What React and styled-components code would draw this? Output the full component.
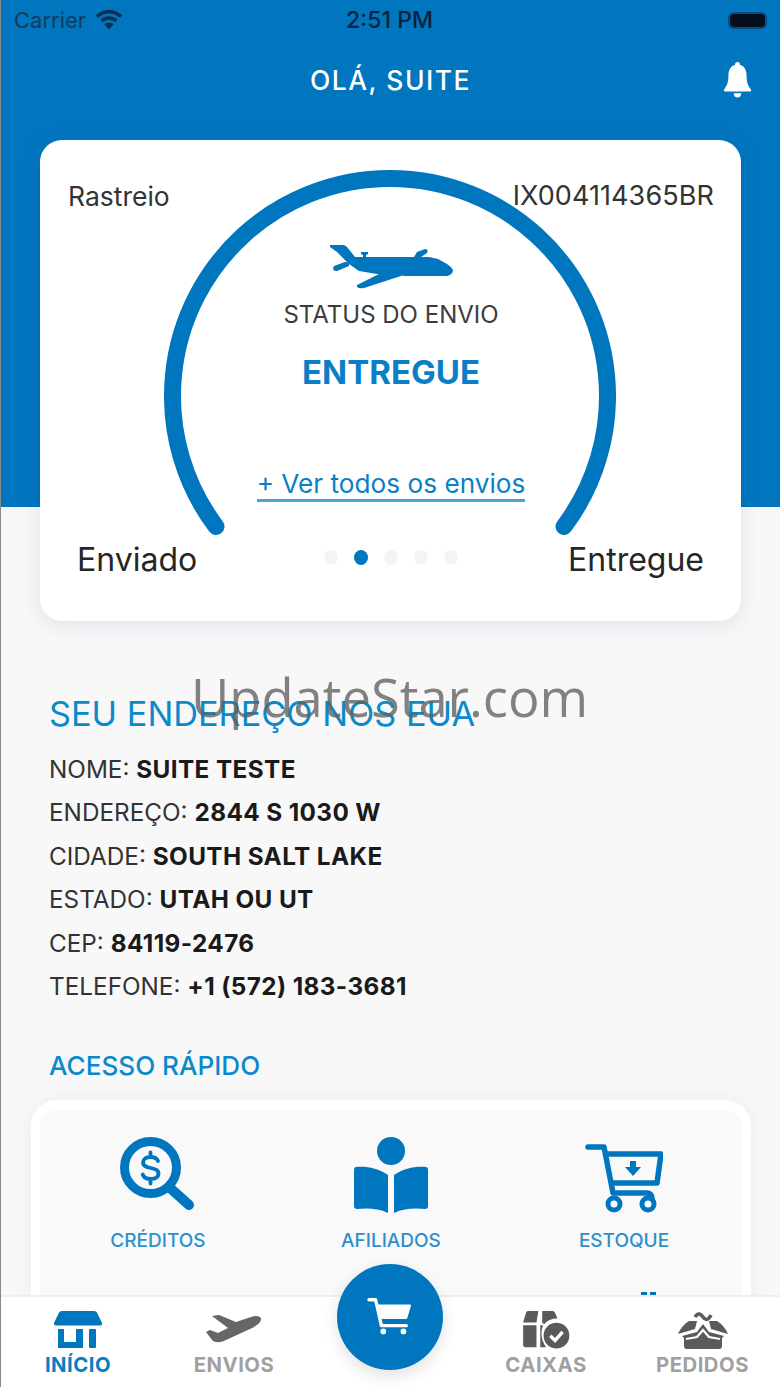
import React from 'react'
import styled, { createGlobalStyle } from 'styled-components'

const BLUE = '#0076bf'

const GlobalStyle = createGlobalStyle`
  html, body { margin: 0; padding: 0; background: #f8f8f9; }
  * { box-sizing: border-box; }
  body { font-family: Inter, "Liberation Sans", sans-serif; }
`

const Screen = styled.div`
  position: relative;
  width: 780px;
  height: 1387px;
  overflow: hidden;
  background: #f8f8f9;
  border-left: 1px solid #8a8a8a;
`

const Hero = styled.header`
  height: 507px;
  background: ${BLUE};
  padding: 0 39px;
`

const StatusBar = styled.div`
  display: grid;
  grid-template-columns: 1fr auto 1fr;
  align-items: center;
  height: 40px;
  margin: 0 -39px;
  padding: 0 15px 0 13px;
  font-size: 22px;
`

const Carrier = styled.div`
  display: flex;
  align-items: center;
  gap: 9px;
  color: #123c5f;
`

const Clock = styled.div`
  color: #08233b;
  font-weight: 500;
  font-size: 23px;
`

const Battery = styled.div`
  justify-self: end;
  width: 35px;
  height: 13px;
  border-radius: 4px;
  background: #05101c;
  box-shadow: 0 0 0 2px rgba(8, 50, 90, 0.6);
`

const Title = styled.div`
  display: flex;
  align-items: center;
  justify-content: center;
  position: relative;
  height: 80px;
  margin-bottom: 20px;
  color: #fff;
  font-size: 26.5px;
  font-weight: 500;
  letter-spacing: 1.5px;
`

const BellSpot = styled.span`
  position: absolute;
  right: -11px;
  top: 22px;
  line-height: 0;
`

const Card = styled.section`
  position: relative;
  height: 481px;
  padding: 41px 27px 0 28px;
  background: #fff;
  border-radius: 22px;
  box-shadow: 0 4px 22px rgba(0, 40, 80, 0.1);
`

const Gauge = styled.svg`
  position: absolute;
  left: 124px;
  top: 30px;
`

const CardTop = styled.div`
  position: relative;
  display: flex;
  justify-content: space-between;
  color: #333;
  font-size: 26.5px;
  line-height: 30px;
`

const TrackCode = styled.span`
  font-size: 27px;
  letter-spacing: 0.1px;
`

const Center = styled.div`
  position: relative;
  display: flex;
  flex-direction: column;
  align-items: center;
  margin-top: 33px;
`

const StatusLabel = styled.div`
  margin-top: 10px;
  color: #3c3c3c;
  font-size: 24px;
  line-height: 30px;
`

const StatusValue = styled.div`
  margin-top: 23px;
  color: #0a7fc6;
  font-size: 33px;
  font-weight: 700;
  line-height: 38px;
`

const SeeAll = styled.a`
  margin-top: 78px;
  color: #0a7fc6;
  font-size: 26.2px;
  line-height: 30px;
  border-bottom: 3px solid #4aa3d8;
`

const CardBottom = styled.div`
  position: relative;
  display: grid;
  grid-template-columns: 1fr auto 1fr;
  align-items: center;
  margin: 38px 10px 0 9px;
  color: #262626;
  font-size: 32px;
  line-height: 40px;
`

const RightText = styled.span`
  justify-self: end;
`

const Dots = styled.div`
  display: flex;
  gap: 16px;
  margin-top: -6px;
`

const Dot = styled.span`
  width: 14px;
  height: 15px;
  border-radius: 50%;
  background: ${p => (p.$active ? BLUE : '#f4f4f4')};
`

const Address = styled.section`
  margin-top: 187px;
  padding: 0 48px;
`

const SectionTitle = styled.h2`
  margin: 0;
  color: #0a8aca;
  font-size: 34.3px;
  font-weight: 400;
  line-height: 40px;
  white-space: nowrap;
`

const AddressList = styled.div`
  display: flex;
  flex-direction: column;
  margin-top: 14px;
`

const AddressLine = styled.div`
  color: #333;
  font-size: 24.3px;
  line-height: 43.4px;
  white-space: nowrap;
`

const Strong = styled.b`
  color: #1a1a1a;
  font-weight: 700;
  letter-spacing: 0.4px;
`

const QuickTitle = styled.h3`
  margin: 42px 0 0;
  color: #0a8aca;
  font-size: 26.1px;
  font-weight: 500;
  line-height: 32px;
`

const QuickPanel = styled.div`
  display: grid;
  grid-template-columns: repeat(3, 233px);
  justify-content: center;
  align-items: start;
  margin: 18px 29px 0 30px;
  height: 320px;
  padding-top: 36px;
  background: #f9f9fa;
  border: solid #fff;
  border-width: 10px 9px 0 9px;
  border-radius: 26px 26px 0 0;
  box-shadow: 0 0 22px rgba(0, 0, 0, 0.05);
`

const QuickItem = styled.div`
  display: flex;
  flex-direction: column;
  align-items: center;
`

const IconSlot = styled.div`
  display: flex;
  justify-content: center;
  height: 78px;
  margin-top: -9px;
  line-height: 0;
`

const QuickLabel = styled.span`
  margin-top: 14px;
  color: #2d90cc;
  font-size: 19px;
  font-weight: 500;
  line-height: 24px;
`

const TabBar = styled.nav`
  position: absolute;
  left: 0;
  right: 0;
  bottom: 0;
  display: grid;
  grid-template-columns: 154px 158px 1fr 158px 155px;
  height: 92px;
  background: #fff;
  border-top: 2px solid #eeeeee;
`

const Tab = styled.div`
  display: flex;
  flex-direction: column;
  align-items: center;
  padding-top: 12px;
`

const TabIcon = styled.div`
  display: flex;
  align-items: center;
  height: 42px;
  line-height: 0;
`

const TabLabel = styled.span`
  margin-top: 2px;
  color: ${p => (p.$active ? '#0a7ec2' : '#a0a0a0')};
  font-size: 20.3px;
  font-weight: 700;
  letter-spacing: 0.5px;
  line-height: 24px;
`

const Fab = styled.div`
  position: absolute;
  left: 336px;
  bottom: 17px;
  display: flex;
  align-items: center;
  justify-content: center;
  width: 106px;
  height: 106px;
  border-radius: 50%;
  background: ${BLUE};
  box-shadow: 0 6px 16px rgba(0, 0, 0, 0.12);
`

const PeekDots = styled.div`
  position: absolute;
  left: 640px;
  top: 1292px;
  width: 15px;
  height: 3px;
  background: linear-gradient(90deg, ${BLUE} 0 40%, transparent 40% 60%, ${BLUE} 60%);
`

const Watermark = styled.div`
  position: absolute;
  left: 190px;
  top: 665px;
  color: rgba(95, 95, 95, 0.78);
  font-family: "Open Sans", sans-serif;
  font-size: 52.5px;
  line-height: 64px;
  white-space: nowrap;
`

const WifiIcon = () => (
  <svg width="28" height="22" viewBox="0 0 28 22" fill="none" stroke="#0b2f4f" strokeWidth="3.4">
    <path d="M2 7.5C9 1.2 19 1.2 26 7.5" />
    <path d="M6.5 12C11 8 17 8 21.5 12" />
    <path d="M14 20.5l-4.6-5.2c2.600-2 6.600-2 9.200 0z" fill="#0b2f4f" stroke="none" />
  </svg>
)

const BellIcon = () => (
  <svg width="29" height="36" viewBox="0 0 30 38" fill="#fff">
    <path d="M15 0c1.600 0 2.600 1.200 2.600 2.800C22.600 4.200 24.600 9 24.600 14.500c0 6 .8 9.600 4.600 14.600.6 1 .2 2-1 2H1.800c-1.200 0-1.600-1-1-2C4.600 24.100 5.400 20.500 5.400 14.500 5.400 9 7.400 4.200 12.400 2.800 12.400 1.200 13.400 0 15 0z" />
    <path d="M11 33h8c0 2.800-1.800 4.500-4 4.500s-4-1.700-4-4.500z" />
  </svg>
)

const PlaneStatus = () => (
  <svg width="124" height="46" viewBox="0 0 124 46" fill={BLUE}>
    <path d="M1 1H14Q16 1 18 3L26 13H100L109 15L118 20Q124 24 124 27Q123 31 118 32H75L66 30H48L30 27L20 20L8 8L1 3Z" />
    <path d="M60 29L73 28Q75 30 72 32L35 44Q27 45 28 41L50 30Z" />
    <path d="M5 22L16 18Q21 18 20 22L8 27Q2 27 5 22Z" />
    <path d="M88 8L96 5Q100 5 98 9L92 13H85Z" />
    <path d="M32 8h7v2l-2 1v3h-3v-3l-2-1z" />
  </svg>
)

const CreditsIcon = () => (
  <svg width="78" height="78" viewBox="0 0 78 78" fill="none">
    <circle cx="31.500" cy="30.500" r="26" stroke={BLUE} strokeWidth="9" />
    <path d="M50 50 70 68" stroke={BLUE} strokeWidth="10" strokeLinecap="round" />
    <path d="M39 24c-1-2.500-4-4-7.500-4-4.500 0-7.500 2.200-7.500 5.500 0 7.500 15.500 3.500 15.500 11 0 3.500-3.200 5.500-7.800 5.500-4 0-7-1.700-8-4.500M31.500 15.500V20M31.500 42v4.500" stroke={BLUE} strokeWidth="3.800" strokeLinecap="round" />
  </svg>
)

const AffiliatesIcon = () => (
  <svg width="78" height="78" viewBox="0 0 78 78" fill={BLUE}>
    <circle cx="39" cy="14" r="14" />
    <path d="M4 30c10-1 22 1 32 8v38C26 71 14 71 5 72c-2 0-3-1-3-3V33c0-2 1-3 2-3z" />
    <path d="M74 30c-10-1-22 1-32 8v38c10-5 22-5 31-4 2 0 3-1 3-3V33c0-2-1-3-2-3z" />
  </svg>
)

const StockIcon = () => (
  <svg width="78" height="78" viewBox="0 0 78 78" fill="none" stroke={BLUE}>
    <path d="M3 10H19L28 56H62C65 56 67 58 67 61" strokeWidth="5.500" strokeLinecap="round" strokeLinejoin="round" />
    <path d="M21 17H76L72 46H27" strokeWidth="5.500" strokeLinejoin="round" />
    <circle cx="29" cy="67" r="6" strokeWidth="5" />
    <circle cx="63" cy="67" r="6" strokeWidth="5" />
    <path d="M45 24h6v6h5L48 39 40 30h5z" fill={BLUE} stroke="none" />
  </svg>
)

const StoreIcon = () => (
  <svg width="50" height="40" viewBox="0 0 50 40" fill={BLUE}>
    <path d="M9 1h32c1.500 0 2.500.8 3.200 2L49 13c.5 1.500-.2 2.500-2 2.500H3C1.200 15.500.5 14.500 1 13L5.800 3C6.500 1.800 7.500 1 9 1z" />
    <path d="M5 19h6v13h12V19h7v19H5z" />
    <rect x="36" y="19" width="7" height="19" rx="1" />
  </svg>
)

const PlaneTab = () => (
  <svg width="56" height="30" viewBox="0 0 56 30" fill="#666">
    <path d="M6 1L13 0L30 7L45 2C50 0 55 1 55 4C55 8 50 11 44 14L20 25C14 28 9 28 6 25L0 17L4 15L12 18L22 13Z" />
  </svg>
)

const BoxesTab = () => (
  <svg width="48" height="40" viewBox="0 0 50 42" fill="#5a5a5a">
    <path d="M6 1h11L15 13H1L4 3C4.500 2 5 1 6 1z" />
    <path d="M21 1h11c1 0 2 1 2.500 2L37 9c-6 0-11 2-14 6l-2-2z" />
    <path d="M1 16h14v23H3c-1 0-2-1-2-2z" />
    <path d="M19 16h3c-3 7-2 16 3 23h-6z" />
    <circle cx="36" cy="27" r="13.500" />
    <path d="M29.500 27l5 5 8-9" fill="none" stroke="#fff" strokeWidth="3.500" />
  </svg>
)

const OpenBoxTab = () => (
  <svg width="50" height="40" viewBox="0 0 50 40" fill="#5a5a5a">
    <path d="M17 7c3-5 6-3 8 0s5 4 8-2" fill="none" stroke="#5a5a5a" strokeWidth="3.500" />
    <path d="M11 11h8l-2 8-17 5c2-5 6-10 11-13z" />
    <path d="M39 11h-8l2 8 17 5c-2-5-6-10-11-13z" />
    <path d="M4 26l15-4 6-8 6 8 15 4-2 2v8c0 2-1 3-3 3H9c-2 0-3-1-3-3v-8z" />
    <path d="M8 29l11-2 6-7 6 7 11 2" fill="none" stroke="#fff" strokeWidth="2.200" />
  </svg>
)

const CartIcon = () => (
  <svg width="46" height="42" viewBox="0 0 48 42" fill="none" stroke="#fff">
    <path d="M2 3h7l6 27h26" strokeWidth="3.500" strokeLinecap="round" strokeLinejoin="round" />
    <path d="M11 9h34l-4 13H14z" fill="#fff" strokeWidth="2" strokeLinejoin="round" />
    <circle cx="17" cy="36" r="3" fill="#fff" stroke="none" />
    <circle cx="38" cy="36" r="3" fill="#fff" stroke="none" />
  </svg>
)

const address = [
  ['NOME:', 'SUITE TESTE'],
  ['ENDEREÇO:', '2844 S 1030 W'],
  ['CIDADE:', 'SOUTH SALT LAKE'],
  ['ESTADO:', 'UTAH OU UT'],
  ['CEP:', '84119-2476'],
  ['TELEFONE:', '+1 (572) 183-3681'],
]

const quick = [
  { label: 'CRÉDITOS', icon: <CreditsIcon /> },
  { label: 'AFILIADOS', icon: <AffiliatesIcon /> },
  { label: 'ESTOQUE', icon: <StockIcon /> },
]

const tabs = [
  { label: 'INÍCIO', icon: <StoreIcon />, active: true },
  { label: 'ENVIOS', icon: <PlaneTab /> },
  { spacer: true, label: 'spacer' },
  { label: 'CAIXAS', icon: <BoxesTab /> },
  { label: 'PEDIDOS', icon: <OpenBoxTab /> },
]

export default function App() {
  return (
    <Screen>
      <GlobalStyle />
      <Hero>
        <StatusBar>
          <Carrier>Carrier <WifiIcon /></Carrier>
          <Clock>2:51 PM</Clock>
          <Battery />
        </StatusBar>
        <Title>
          OLÁ, SUITE
          <BellSpot><BellIcon /></BellSpot>
        </Title>
        <Card>
          <Gauge width="452" height="380" viewBox="0 0 452 380" fill="none">
            <path d="M52 356.500A217.500 217.500 0 1 1 400 356.500" stroke={BLUE} strokeWidth="17" strokeLinecap="round" />
          </Gauge>
          <CardTop>
            <span>Rastreio</span>
            <TrackCode>IX004114365BR</TrackCode>
          </CardTop>
          <Center>
            <PlaneStatus />
            <StatusLabel>STATUS DO ENVIO</StatusLabel>
            <StatusValue>ENTREGUE</StatusValue>
            <SeeAll>+ Ver todos os envios</SeeAll>
          </Center>
          <CardBottom>
            <span>Enviado</span>
            <Dots>
              {[0, 1, 2, 3, 4].map(i => <Dot key={i} $active={i === 1} />)}
            </Dots>
            <RightText>Entregue</RightText>
          </CardBottom>
        </Card>
      </Hero>
      <Address>
        <SectionTitle>SEU ENDEREÇO NOS EUA</SectionTitle>
        <AddressList>
          {address.map(([k, v]) => (
            <AddressLine key={k}>{k} <Strong>{v}</Strong></AddressLine>
          ))}
        </AddressList>
        <QuickTitle>ACESSO RÁPIDO</QuickTitle>
      </Address>
      <QuickPanel>
        {quick.map(q => (
          <QuickItem key={q.label}>
            <IconSlot>{q.icon}</IconSlot>
            <QuickLabel>{q.label}</QuickLabel>
          </QuickItem>
        ))}
      </QuickPanel>
      <PeekDots />
      <TabBar>
        {tabs.map(t => t.spacer ? <span key={t.label} /> : (
          <Tab key={t.label}>
            <TabIcon>{t.icon}</TabIcon>
            <TabLabel $active={t.active}>{t.label}</TabLabel>
          </Tab>
        ))}
      </TabBar>
      <Fab><CartIcon /></Fab>
      <Watermark>UpdateStar.com</Watermark>
    </Screen>
  )
}
